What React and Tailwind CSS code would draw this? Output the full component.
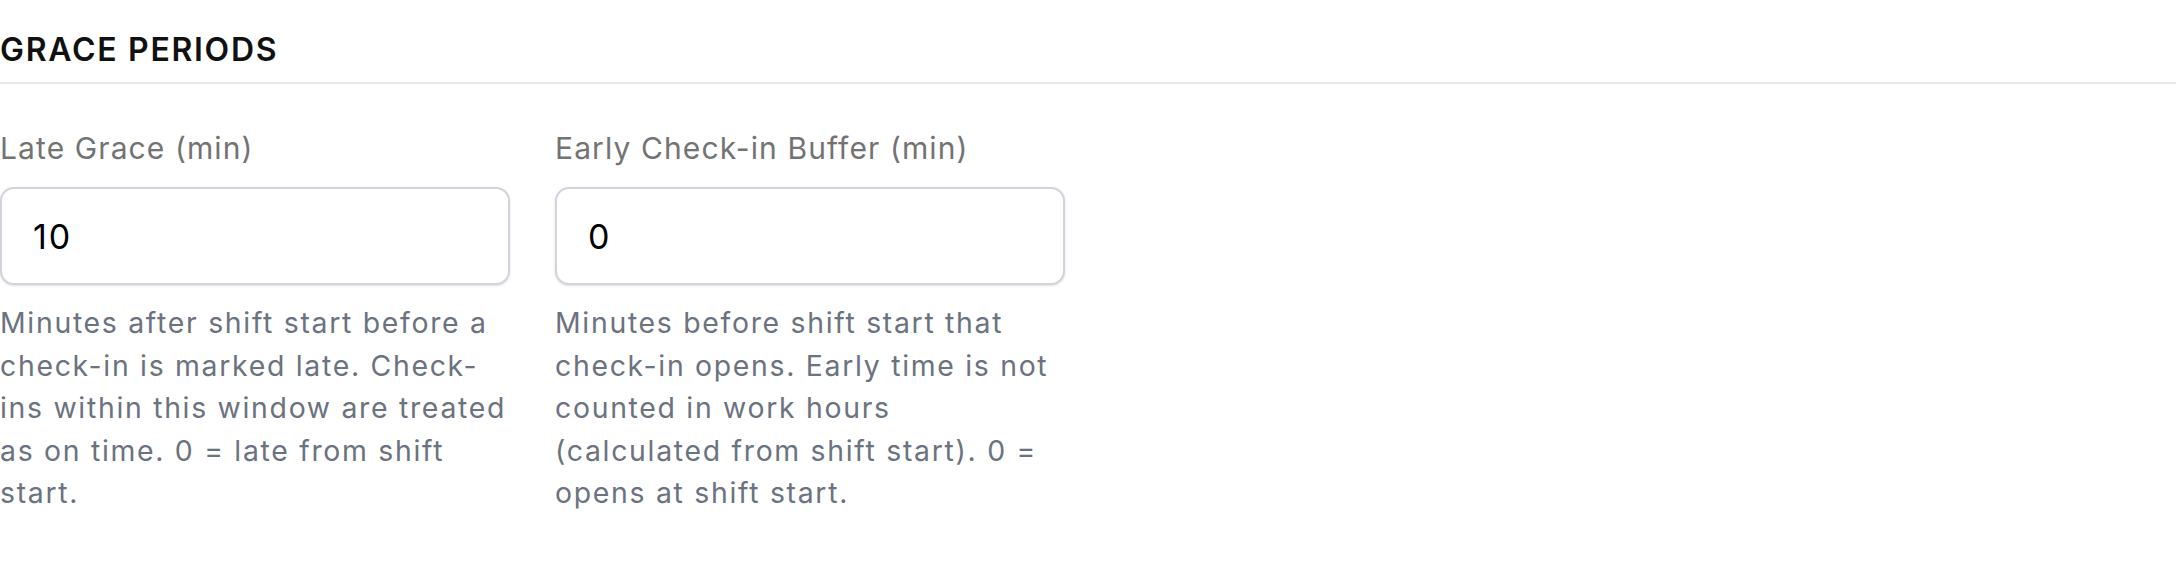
import React from "react";

const fields = [
  {
    label: "Late Grace (min)",
    value: "10",
    help: "Minutes after shift start before a check-in is marked late. Check-ins within this window are treated as on time. 0 = late from shift start.",
  },
  {
    label: "Early Check-in Buffer (min)",
    value: "0",
    help: "Minutes before shift start that check-in opens. Early time is not counted in work hours (calculated from shift start). 0 = opens at shift start.",
  },
];

function Field({ label, value, help }) {
  return (
    <div className="flex w-[510px] flex-col">
      <label className="text-[30px] leading-[40px] tracking-[1.1px] text-[#737373]">{label}</label>
      <input
        type="number"
        readOnly
        value={value}
        className="mt-[19px] h-[98px] w-full rounded-[14px] border-2 border-[#d1d5db] bg-white pl-[31px] text-[34px] tracking-[2px] text-black shadow-sm outline-none"
      />
      <p className="mt-[17px] text-[28.4px] leading-[42.6px] tracking-[1.7px] text-[#6b7280]">{help}</p>
    </div>
  );
}

export default function App() {
  return (
    <div className="min-h-[576px] w-full bg-white font-['Inter','Noto_Sans',sans-serif]">
      <h3 className="border-b-2 border-[#e5e7eb] pt-[30px] pb-[12px] text-[32px] leading-[40px] font-semibold tracking-[1.7px] text-[#111111] uppercase">
        Grace Periods
      </h3>
      <div className="mt-[44px] flex gap-[45px]">
        {fields.map((f) => (
          <Field key={f.label} {...f} />
        ))}
      </div>
    </div>
  );
}
